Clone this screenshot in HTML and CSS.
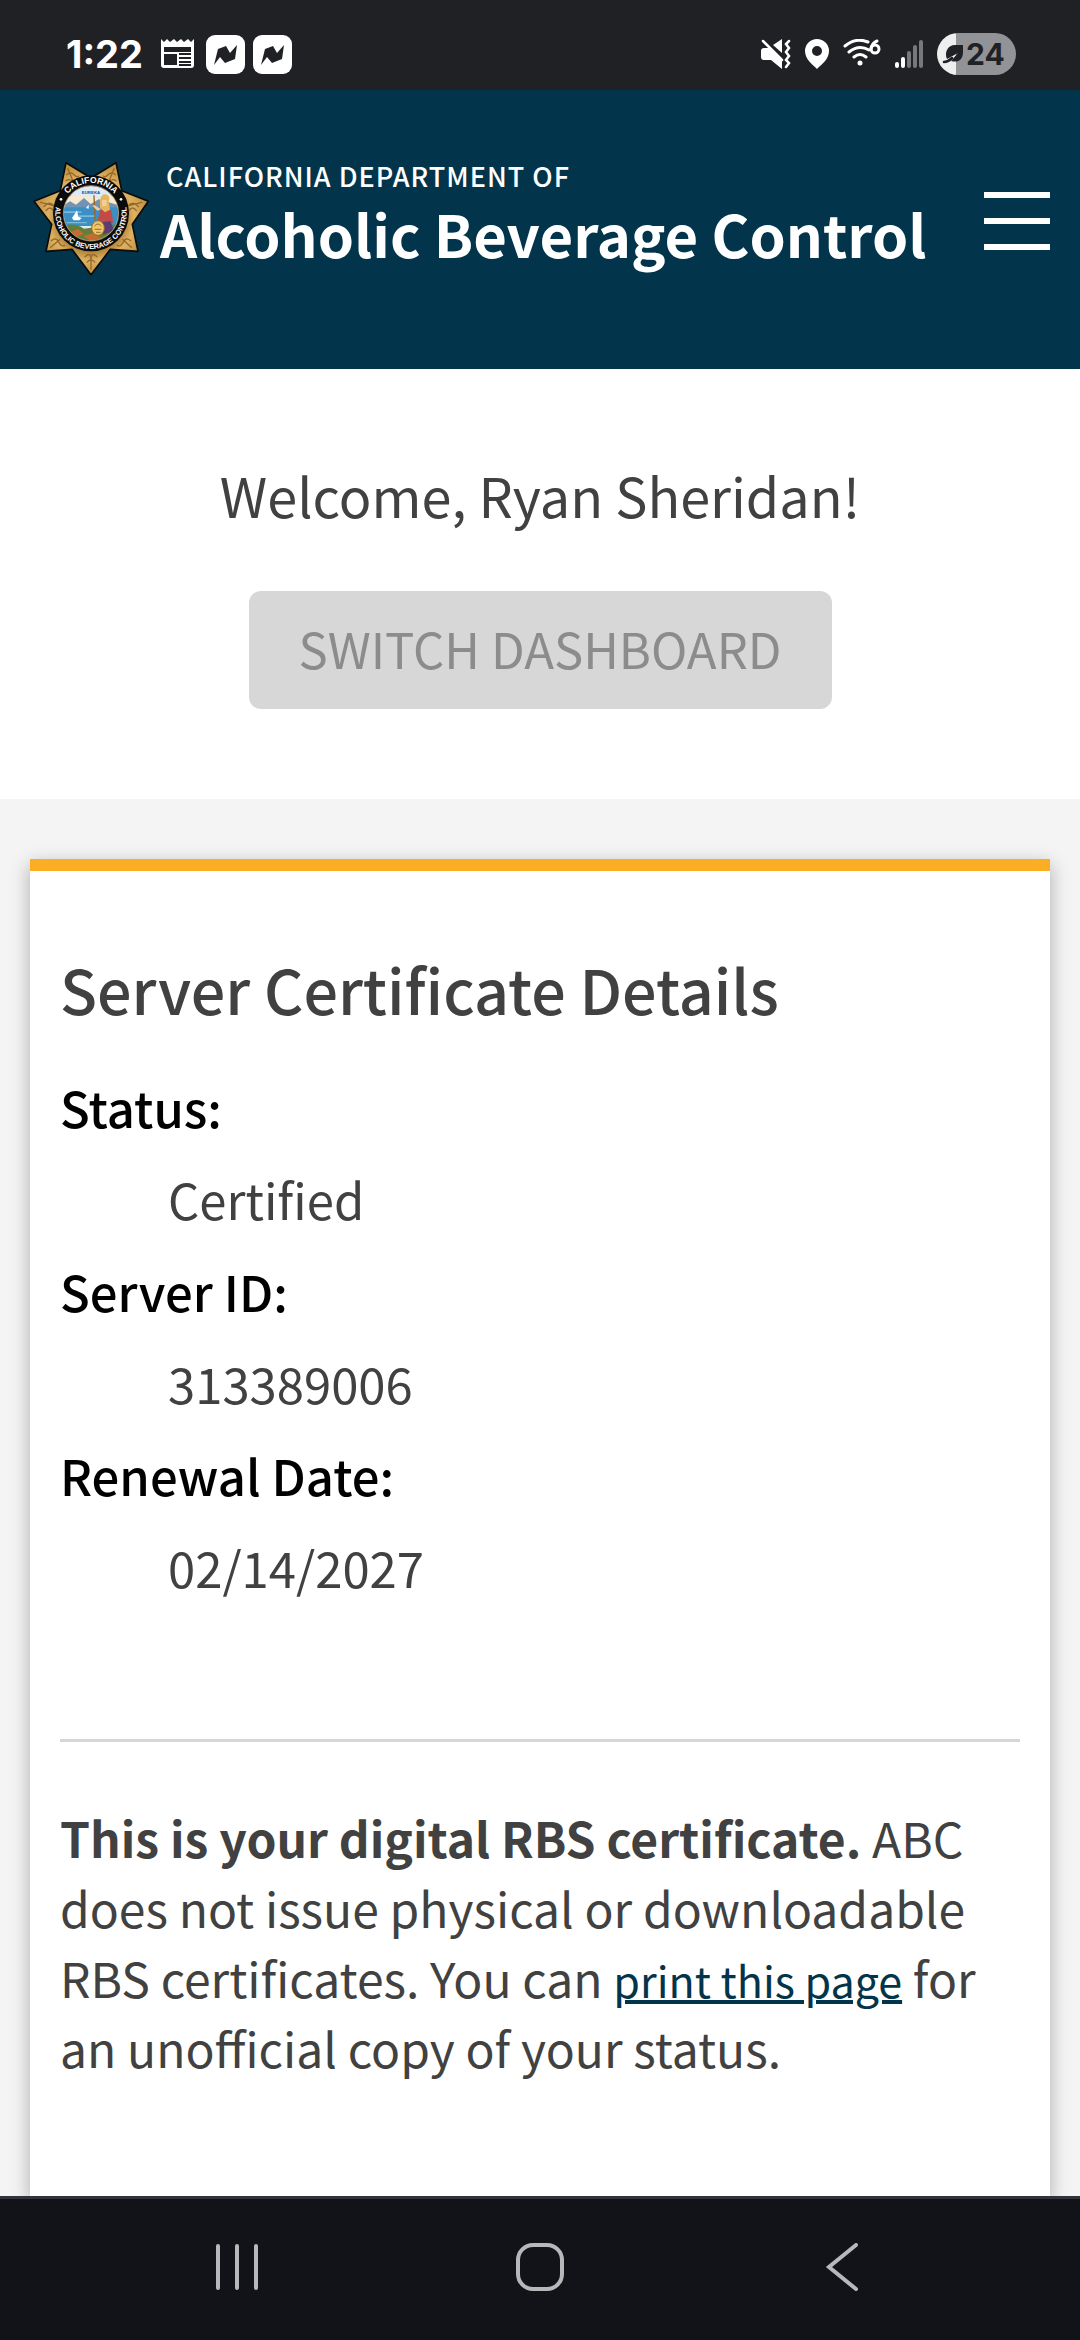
FILE: index.html
```html
<!DOCTYPE html>
<html lang="en">
<head>
  <meta charset="UTF-8">
  <meta name="viewport" content="width=device-width, initial-scale=1">
  <title>Server Certificate Details</title>
  <link rel="stylesheet" href="styles.css">
</head>
<body>
  <div class="status-bar">
    <div class="status-left">
      <span class="clock">1:22</span>
      <svg class="news-icon" width="34" height="30" viewBox="0 0 34 30">
        <path fill="#fff" fill-rule="evenodd" d="M0 0l3 3 3-3 3 3 4-3 3 3 4-3 3 3 4-3 3 3 3-3v26q0 3-3 3H3q-3 0-3-3zM3 8v5h27V8zM3 15v11h13V15z"/>
        <path stroke="#202124" stroke-width="2" d="M18 15h12M18 19h12M18 23h12M18 26h12"/>
      </svg>
      <svg width="39" height="39" viewBox="0 0 39 39">
        <rect width="39" height="39" rx="9" fill="#fff"/>
        <path fill="#202124" d="M8 30l4-16 8-3 4 7 7-8-2 14-10 4-5-6z"/>
      </svg>
      <svg width="39" height="39" viewBox="0 0 39 39">
        <rect width="39" height="39" rx="9" fill="#fff"/>
        <path fill="#202124" d="M8 30l4-16 8-3 4 7 7-8-2 14-10 4-5-6z"/>
      </svg>
    </div>
    <div class="status-right">
      <svg width="30" height="30" viewBox="0 0 30 30">
        <path fill="#fff" d="M3 9h5l13 13v8L10 21H3q-3 0-3-3v-6q0-3 3-3zM12 6l9-6v14z"/>
        <path fill="none" stroke="#fff" stroke-width="2.5" stroke-linecap="round" d="M2 2l19 19M28 2l-3 3 3 4-3 4 3 4-3 4 3 3-3 4"/>
      </svg>
      <svg width="24" height="30" viewBox="0 0 24 30">
        <path fill="#fff" fill-rule="evenodd" d="M12 0a12 12 0 0 1 12 12c0 8-7 13-12 18C7 25 0 20 0 12A12 12 0 0 1 12 0zm0 7a5 5 0 1 0 0 10 5 5 0 0 0 0-10z"/>
      </svg>
      <svg width="38" height="30" viewBox="0 0 38 30">
        <g fill="none" stroke="#fff" stroke-width="3" stroke-linecap="round">
          <path d="M2 7Q13-2 25 3M6 13q10-8 20-2M11 18q6-5 12 0"/>
          <path d="M34 2q-5 2-6 8" />
          <circle cx="32" cy="10" r="4"/>
        </g>
        <circle cx="17" cy="24" r="2.5" fill="#fff"/>
      </svg>
      <svg width="28" height="30" viewBox="0 0 28 30">
        <g stroke-width="4" stroke-linecap="round">
          <path stroke="#fff" d="M2 25v2M8 20v7"/>
          <path stroke="#77787b" d="M14 14v13M20 8v19M26 3v24"/>
        </g>
      </svg>
      <div class="battery">
        <svg width="22" height="20" viewBox="0 0 22 20">
          <path fill="#202124" d="M21 1v7c0 8-5 11-12 9l7-8-11 6C2 8 6 1 13 1z"/>
          <path fill="none" stroke="#202124" stroke-width="2.5" stroke-linecap="round" d="M2 18q4 0 8-4"/>
        </svg>
        <span>24</span>
      </div>
    </div>
  </div>

  <header class="site-header">
    <a class="brand" href="#">
      <svg class="badge" viewBox="30 33 360 378">
        <defs>
          <radialGradient id="gold">
            <stop offset="55%" stop-color="#a9792f"/>
            <stop offset="75%" stop-color="#dcb262"/>
            <stop offset="100%" stop-color="#c0903f"/>
          </radialGradient>
          <clipPath id="seal"><circle cx="213" cy="220" r="82"/></clipPath>
          <path id="arcTop" d="M122 220a91 91 0 0 1 182 0"/>
          <path id="arcBottom" d="M122 164a107 107 0 1 0 182 0"/>
        </defs>
        <path fill="url(#gold)" stroke="#0b0b0b" stroke-width="5" stroke-linejoin="round" d="M138 68l75 46 75-46 17 84 80 32-48 69 17 81-83-6-58 76-57-76-78 6 17-81-53-69 79-32z"/>
        <g fill="none" stroke="#96692a" stroke-width="4" stroke-linecap="round">
          <path d="M144 86l14 35M140 104q12-10 22 0t14 4M138 122q12-8 22 4M282 86l-14 35M286 104q-12-10-22 0t-14 4M288 122q-12-8-22 4"/>
          <path d="M62 187l35 9M72 200q14-18 28-4M78 212q12-16 22 0M365 187l-35 9M355 200q-14-18-28-4M349 212q-12-16-22 0"/>
          <path d="M92 322l27-23M94 302q14-12 22 4t18 10M334 322l-25-23M332 302q-14-12-22 4t-18 10"/>
          <path d="M213 388v-34M195 350q18-16 18 8 0-24 18-8M202 366q11-12 11 2 0-14 11-2"/>
        </g>
        <circle cx="213" cy="220" r="114" fill="#0b0b0b"/>
        <g clip-path="url(#seal)">
          <rect x="130" y="136" width="166" height="168" fill="#dcebf5"/>
          <path fill="#f5e9cf" d="M130 176q40-18 80-6t86-12v45H130z"/>
          <path fill="#7193b5" d="M130 196l20-12 18 10 24-20 20 18 24-14 60 18v20H130z"/>
          <path fill="#3a8fc4" d="M130 202h166v56H130z"/>
          <path fill="#77b9dc" d="M132 214h52v5h-52zM176 226h50v5h-50zM140 246h60v4h-60z"/>
          <path fill="#647e35" d="M130 258q32-12 62 8l104-14v60H130z"/>
          <path fill="#c66c32" d="M152 276l22-9 18 15-24 9zM190 288l28-8 26 14-30 10z"/>
          <path fill="#fff" d="M156 234l15-23 4 19 10 4-7 7h-17zM198 204l8-10v12z"/>
          <path stroke="#96692a" stroke-width="4" d="M222 166l3 75"/>
          <path fill="#c34a48" d="M242 207l14-9 18 14 6 34-30 14-16-24z"/>
          <path fill="#5b3c75" d="M236 247l36-3 10 28-34 12z"/>
          <path fill="#e6b65d" d="M240 180q4-19 17-17 16 4 9 22l4 24-15 8-15-13z"/>
          <path fill="#f2cc99" d="M246 180h14v18h-14zM232 212l-14-14 5-3 20 13z"/>
          <ellipse cx="234" cy="264" rx="19" ry="22" fill="#edc56a" stroke="#9e6b23" stroke-width="3"/>
          <path fill="none" stroke="#9e6b23" stroke-width="3" d="M224 258q10-12 20 0M224 268h20M228 277h14"/>
          <text class="seal-motto" x="213" y="163">EUREKA</text>
        </g>
        <circle cx="213" cy="220" r="83" fill="none" stroke="#d8c08a" stroke-width="2"/>
        <text class="seal-state"><textPath href="#arcTop" startOffset="50%">CALIFORNIA</textPath></text>
        <text class="seal-text"><textPath href="#arcBottom" startOffset="50%">ALCOHOLIC BEVERAGE CONTROL</textPath></text>
        <circle cx="123" cy="178" r="4" fill="#fff"/>
        <circle cx="303" cy="178" r="4" fill="#fff"/>
      </svg>
      <span class="brand-text">
        <span class="brand-small">CALIFORNIA DEPARTMENT OF</span>
        <span class="brand-name">Alcoholic Beverage Control</span>
      </span>
    </a>
    <button class="menu-button" type="button" aria-label="Menu">
      <span></span>
      <span></span>
      <span></span>
    </button>
  </header>

  <section class="welcome">
    <p>Welcome, Ryan Sheridan!</p>
    <button class="switch-button" type="button" disabled>SWITCH DASHBOARD</button>
  </section>

  <main>
    <div class="card">
      <h2>Server Certificate Details</h2>
      <dl>
        <dt>Status:</dt>
        <dd>Certified</dd>
        <dt>Server ID:</dt>
        <dd>313389006</dd>
        <dt>Renewal Date:</dt>
        <dd>02/14/2027</dd>
      </dl>
      <hr>
      <p><strong>This is your digital RBS certificate.</strong> ABC does not issue physical or downloadable RBS certificates. You can <a href="#">print this page</a> for an unofficial copy of your status.</p>
    </div>
  </main>

  <nav class="nav-bar">
    <button type="button" aria-label="Recent apps">
      <svg width="48" height="48" viewBox="0 0 48 48">
        <path d="M4 3v42M23 3v42M42 3v42"/>
      </svg>
    </button>
    <button type="button" aria-label="Home">
      <svg width="48" height="48" viewBox="0 0 48 48">
        <rect x="2" y="2" width="44" height="44" rx="15"/>
      </svg>
    </button>
    <button type="button" aria-label="Back">
      <svg width="48" height="48" viewBox="0 0 48 48">
        <path d="M38 2L11 24l27 22"/>
      </svg>
    </button>
  </nav>
</body>
</html>
```
FILE: styles.css
```css
* {
  box-sizing: border-box;
}

body {
  margin: 0;
  min-height: 100vh;
  display: flex;
  flex-direction: column;
  font-family: "Noto Sans CJK SC", "Noto Sans", sans-serif;
  font-size: 49px;
  color: #414141;
  background: #fff;
}

h2, p, dl, dd {
  margin: 0;
}

button {
  font-family: inherit;
  border: none;
  cursor: pointer;
}

/* phone status bar */
.status-bar {
  height: 90px;
  padding: 18px 64px 0 66px;
  display: flex;
  justify-content: space-between;
  align-items: center;
  background: #202124;
  color: #fff;
  font-family: Inter, sans-serif;
}

.status-left {
  display: flex;
  align-items: center;
  gap: 8px;
}

.clock {
  font-size: 38px;
  line-height: 40px;
  font-weight: 700;
}

.news-icon {
  margin: 0 3px 0 10px;
}

.status-right {
  display: flex;
  align-items: center;
  gap: 14px;
}

.battery {
  height: 42px;
  width: 79px;
  padding-left: 5px;
  display: flex;
  align-items: center;
  gap: 2px;
  border-radius: 21px;
  background: linear-gradient(to right, #eee 19px, #929396 19px);
  color: #202124;
  font-size: 30px;
  font-weight: 700;
}

/* site header */
.site-header {
  height: 279px;
  padding: 67px 30px 0;
  display: flex;
  justify-content: space-between;
  align-items: flex-start;
  background: #02344b;
}

.brand {
  display: flex;
  align-items: center;
  gap: 10px;
  height: 114px;
  color: #fff;
  text-decoration: none;
}

.badge {
  width: 120px;
  height: 126px;
}

.seal-text,
.seal-state {
  fill: #fff;
  font-family: "Liberation Sans", sans-serif;
  font-size: 22px;
  font-weight: 700;
  text-anchor: middle;
}

.seal-state {
  font-size: 26px;
}

.seal-motto {
  fill: #24509a;
  font-family: "Liberation Sans", sans-serif;
  font-size: 13px;
  font-weight: 700;
  text-anchor: middle;
}

.brand-text {
  display: flex;
  flex-direction: column;
  white-space: nowrap;
}

.brand-small {
  padding-left: 6px;
  font-size: 27px;
  line-height: 38px;
  font-weight: 500;
  letter-spacing: 1px;
}

.brand-name {
  font-size: 58px;
  line-height: 76px;
  font-weight: 700;
}

.menu-button {
  width: 66px;
  height: 58px;
  margin-top: 35px;
  padding: 0;
  display: flex;
  flex-direction: column;
  justify-content: space-between;
  background: none;
}

.menu-button span {
  height: 6px;
  background: #fff;
}

/* welcome */
.welcome {
  padding: 90px 30px;
  display: flex;
  flex-direction: column;
  align-items: center;
  gap: 60px;
}

.welcome p {
  font-size: 54px;
  line-height: 72px;
}

.switch-button {
  height: 118px;
  padding: 0 50px 6px;
  border-radius: 12px;
  background: #d7d7d7;
  color: #8c8c8c;
  font-size: 49px;
}

/* certificate */
main {
  flex: 1;
  display: flex;
  padding: 60px 30px 0;
  background: #f4f4f4;
  overflow: hidden;
}

.card {
  flex: 1;
  padding: 82px 30px;
  border-top: 12px solid #fbad23;
  background: #fff;
  box-shadow: 0 6px 18px rgba(0, 0, 0, 0.3);
}

.card h2 {
  font-size: 61px;
  line-height: 72px;
  font-weight: 500;
  margin-bottom: 36px;
}

.card dl {
  line-height: 92px;
}

.card dt {
  font-weight: 500;
  color: #000;
}

.card dd {
  margin-left: 108px;
}

.card hr {
  margin: 126px 0 60px;
  border: none;
  border-top: 3px solid #d7d7d7;
}

.card p {
  font-size: 48px;
  line-height: 70px;
}

.card a {
  font-size: 43px;
  line-height: 1;
  color: #02344b;
  text-decoration-thickness: 4px;
}

/* phone navigation */
.nav-bar {
  height: 144px;
  padding: 0 87px 6px;
  display: flex;
  justify-content: space-around;
  align-items: center;
  border-top: 3px solid #313338;
  background: #121318;
}

.nav-bar button {
  padding: 0;
  line-height: 0;
  background: none;
}

.nav-bar svg {
  fill: none;
  stroke: #b7b8ba;
  stroke-width: 4;
  stroke-linecap: round;
}
```
